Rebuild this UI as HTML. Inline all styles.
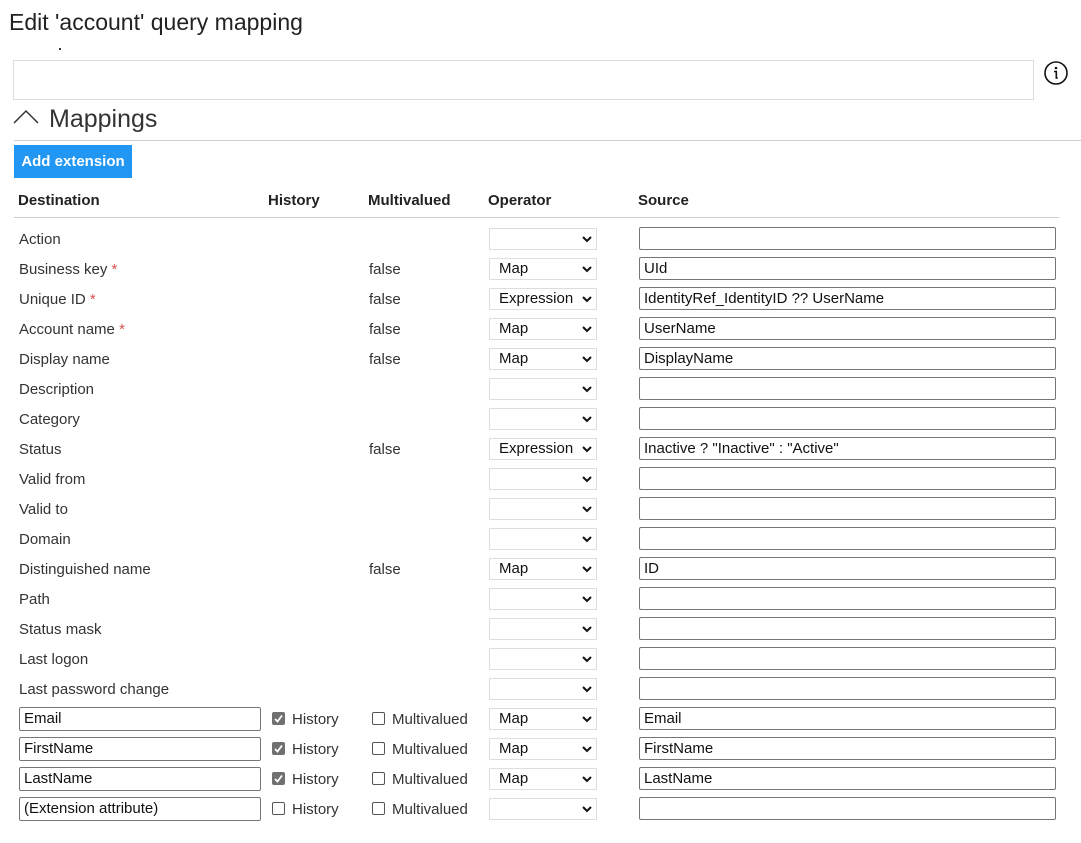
<!DOCTYPE html>
<html><head><style>
body{margin:0;width:1081px;height:843px;background:#fff;font-family:"Liberation Sans",sans-serif;color:#333;position:relative;overflow:hidden}
.a{position:absolute}
.t{font-size:15px;line-height:20px;white-space:nowrap}
.sel{position:absolute;left:489px;width:108px;height:22px;border:1px solid #ddd;font-size:15px;line-height:20px;color:#111;padding-left:9px;box-sizing:border-box}
.sel svg{position:absolute;right:4px;top:7px}
.src{position:absolute;left:639px;width:417px;height:23px;border:1px solid #767676;border-radius:2px;font-size:15px;line-height:22px;color:#111;padding-left:4px;box-sizing:border-box}
.dst{position:absolute;left:19px;width:242px;height:24px;border:1px solid #767676;border-radius:2px;font-size:15px;line-height:22px;color:#111;padding-left:4px;box-sizing:border-box}
.cb{position:absolute;width:11px;height:11px;border:1px solid #555;border-radius:2px;background:#fff}
.cb.on{background:#707070;border-color:#707070}
.req{color:#d9534f}
</style></head><body>
<div class="a" style="left:9px;top:9px;font-size:23px;color:#222">Edit 'account' query mapping</div>
<div class="a" style="left:59px;top:48px;width:2px;height:2px;background:#333"></div>
<div class="a" style="left:13px;top:60px;width:1019px;height:38px;border:1px solid #ddd"></div>
<svg class="a" style="left:1044px;top:61px" width="25" height="25"><circle cx="12" cy="12" r="11" fill="none" stroke="#111" stroke-width="1.6"/><circle cx="12" cy="7" r="1.3" fill="#111"/><path d="M10 10.5h2.3v6.5h1.5" fill="none" stroke="#111" stroke-width="1.6"/></svg>
<svg class="a" style="left:13px;top:108px" width="26" height="16"><path d="M1 15L13 3L25 15" fill="none" stroke="#333" stroke-width="1.5"/></svg>
<div class="a" style="left:49px;top:105px;font-size:25px;color:#333">Mappings</div>
<div class="a" style="left:14px;top:140px;width:1067px;height:1px;background:#ccc"></div>
<div class="a" style="left:14px;top:145px;width:118px;height:33px;background:#2196f3;color:#fff;font-weight:bold;font-size:15px;line-height:33px;text-align:center">Add extension</div>
<div class="a t" style="left:18px;top:191px;font-weight:bold;color:#222">Destination</div>
<div class="a t" style="left:268px;top:191px;font-weight:bold;color:#222">History</div>
<div class="a t" style="left:368px;top:191px;font-weight:bold;color:#222">Multivalued</div>
<div class="a t" style="left:488px;top:191px;font-weight:bold;color:#222">Operator</div>
<div class="a t" style="left:638px;top:191px;font-weight:bold;color:#222">Source</div>
<div class="a" style="left:14px;top:217px;width:1045px;height:1px;background:#ccc"></div>
<div id="rows"></div>
<script>
var R=[["Action","","",""],["Business key *","false","Map","UId"],["Unique ID *","false","Expression","IdentityRef_IdentityID ?? UserName"],["Account name *","false","Map","UserName"],["Display name","false","Map","DisplayName"],["Description","","",""],["Category","","",""],["Status","false","Expression",'Inactive ? "Inactive" : "Active"'],["Valid from","","",""],["Valid to","","",""],["Domain","","",""],["Distinguished name","false","Map","ID"],["Path","","",""],["Status mask","","",""],["Last logon","","",""],["Last password change","","",""],
["#Email","1","Map","Email"],["#FirstName","1","Map","FirstName"],["#LastName","1","Map","LastName"],["#(Extension attribute)","0","",""]];
var h="",chev='<svg width="10" height="7"><path d="M1 1L5 5L9 1" fill="none" stroke="#111" stroke-width="2"/></svg>';
R.forEach(function(r,i){var y=228+30*i;
 function esc(s){return s.replace(/&/g,"&amp;").replace(/</g,"&lt;").replace(/"/g,"&quot;")}
 if(r[0][0]=="#"){h+='<div class="dst" style="top:'+(y-1)+'px">'+esc(r[0].slice(1))+'</div>';
  h+='<div class="cb'+(r[1]=="1"?" on":"")+'" style="left:272px;top:'+(y+4)+'px">'+(r[1]=="1"?'<svg width="11" height="11" style="position:absolute;left:0;top:0"><path d="M2 6L4.5 8.5L9 2.5" fill="none" stroke="#fff" stroke-width="1.8"/></svg>':'')+'</div>';
  h+='<div class="a t" style="left:292px;top:'+(y+2)+'px">History</div>';
  h+='<div class="cb" style="left:372px;top:'+(y+4)+'px"></div><div class="a t" style="left:392px;top:'+(y+2)+'px">Multivalued</div>';
 } else {
  var n=esc(r[0]).replace(" *",' <span class="req">*</span>');
  h+='<div class="a t" style="left:19px;top:'+(y+2)+'px">'+n+'</div>';
  if(r[1])h+='<div class="a t" style="left:369px;top:'+(y+2)+'px">'+r[1]+'</div>';
 }
 h+='<div class="sel" style="top:'+y+'px">'+r[2]+chev+'</div>';
 h+='<div class="src" style="top:'+(y-1)+'px">'+esc(r[3])+'</div>';
});
document.getElementById("rows").innerHTML=h;
</script>
</body></html>
